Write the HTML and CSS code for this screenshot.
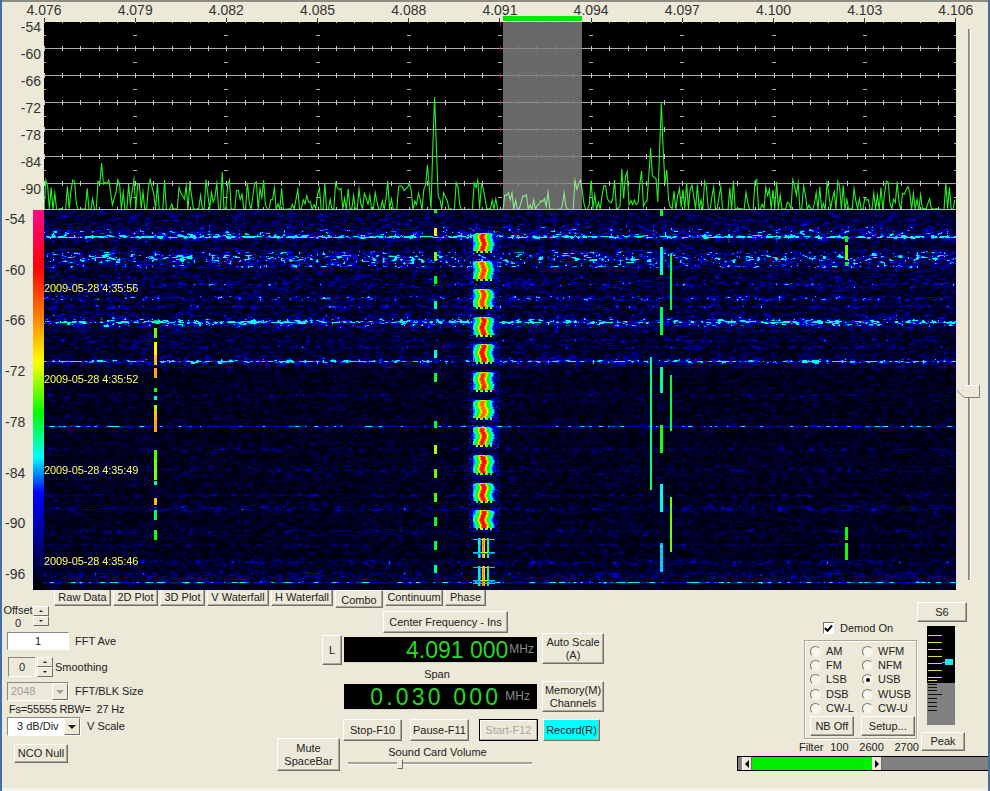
FILE: index.html
```html
<!DOCTYPE html>
<html lang="en">
<head>
<meta charset="utf-8">
<title>Spectrum Lab</title>
<link rel="stylesheet" href="styles.css">
</head>
<body>
<div class="window">
  <div class="chart">
    <div class="axis-cell">
      <div class="axis">
        <span class="tick">4.076</span><span class="tick">4.079</span><span class="tick">4.082</span><span class="tick">4.085</span><span class="tick">4.088</span><span class="tick">4.091</span><span class="tick">4.094</span><span class="tick">4.097</span><span class="tick">4.100</span><span class="tick">4.103</span><span class="tick">4.106</span>
      </div>
      <div class="band-bar"></div>
    </div>
    <div class="spec-scale">
      <span>-54</span><span>-60</span><span>-66</span><span>-72</span><span>-78</span><span>-84</span><span>-90</span>
    </div>
    <canvas id="spectrum" class="spectrum" width="912" height="188"></canvas>
    <div class="slider-v"><div class="slider-v-track"></div>
      <svg class="slider-v-thumb" width="23" height="13" viewBox="0 0 23 13"><path d="M0.5 6 L7 0.5 H22.5 V12.5 H7 Z" fill="#ece9d8" stroke="#808080"/><path d="M0.5 6 L7 0.5 H22" fill="none" stroke="#fff"/></svg>
    </div>
    <div class="wf-scale">
      <div class="wf-labels"><span>-54</span><span>-60</span><span>-66</span><span>-72</span><span>-78</span><span>-84</span><span>-90</span><span>-96</span></div>
      <div class="colorbar"></div>
    </div>
    <div class="wf-wrap">
      <canvas id="waterfall" width="912" height="380"></canvas>
      <div class="stamps"><span>2009-05-28 4:35:56</span><span>2009-05-28 4:35:52</span><span>2009-05-28 4:35:49</span><span>2009-05-28 4:35:46</span></div>
    </div>
  </div>

  <div class="tabs">
    <span class="tab tab-raw">Raw Data</span><span class="tab tab-2d">2D Plot</span><span class="tab tab-3d">3D Plot</span><span class="tab tab-v">V Waterfall</span><span class="tab tab-h">H Waterfall</span><span class="tab tab-active">Combo</span><span class="tab tab-cont">Continuum</span><span class="tab tab-phase">Phase</span>
  </div>

  <div class="panel">
    <div class="left">
      <div class="row row-offset">
        <div class="offset-text"><span>Offset</span><span>0</span></div>
        <div class="spin spin-offset"><span class="spin-btn"><i class="tri-up"></i></span><span class="spin-btn"><i class="tri-down"></i></span></div>
      </div>
      <div class="row row-fft"><div class="field field-fft">1</div><span>FFT Ave</span></div>
      <div class="row row-smooth">
        <div class="field field-smooth">0</div>
        <div class="spin spin-smooth"><span class="spin-btn"><i class="tri-up"></i></span><span class="spin-btn"><i class="tri-down"></i></span></div>
        <span>Smoothing</span>
      </div>
      <div class="row row-size">
        <div class="combo combo-size"><span class="combo-text">2048</span><span class="combo-btn"><i class="tri-big tri-dis"></i></span></div>
        <span>FFT/BLK Size</span>
      </div>
      <div class="row row-fs">Fs=55555 RBW=&nbsp; 27 Hz</div>
      <div class="row row-vscale">
        <div class="combo combo-scale"><span class="combo-text">3 dB/Div</span><span class="combo-btn"><i class="tri-big"></i></span></div>
        <span>V Scale</span>
      </div>
      <button class="btn btn-nco">NCO Null</button>
    </div>

    <div class="center">
      <button class="btn btn-cf">Center Frequency - Ins</button>
      <button class="btn btn-l">L</button>
      <div class="display display-freq"><span class="d-val">4.091 000</span><span class="d-unit">MHz</span></div>
      <button class="btn btn-auto">Auto Scale<br>(A)</button>
      <div class="span-label">Span</div>
      <div class="display display-span"><span class="d-val d-wide">0.030 000</span><span class="d-unit d-unit2">MHz</span></div>
      <button class="btn btn-mem">Memory(M)<br>Channels</button>
      <div class="transport">
        <button class="btn btn-tr">Stop-F10</button>
        <button class="btn btn-tr">Pause-F11</button>
        <button class="btn btn-tr btn-start">Start-F12</button>
        <button class="btn btn-rec">Record(R)</button>
      </div>
      <button class="btn btn-mute">Mute<br>SpaceBar</button>
      <div class="volume">
        <div class="volume-label">Sound Card Volume</div>
        <div class="volume-track"><span class="volume-thumb"></span></div>
      </div>
    </div>

    <div class="right">
      <div class="right-top">
        <div class="mode-col">
          <label class="demod"><span class="check"><svg width="9" height="9" viewBox="0 0 9 9"><path d="M1 4 L3.5 6.8 L8 1.5" fill="none" stroke="#000" stroke-width="2"/></svg></span><span>Demod On</span></label>
          <div class="group">
            <div class="radios">
              <span class="opt"><i class="radio"></i>AM</span><span class="opt"><i class="radio"></i>WFM</span>
              <span class="opt"><i class="radio"></i>FM</span><span class="opt"><i class="radio"></i>NFM</span>
              <span class="opt"><i class="radio"></i>LSB</span><span class="opt"><i class="radio radio-on"></i>USB</span>
              <span class="opt"><i class="radio"></i>DSB</span><span class="opt"><i class="radio"></i>WUSB</span>
              <span class="opt"><i class="radio"></i>CW-L</span><span class="opt"><i class="radio"></i>CW-U</span>
            </div>
            <div class="group-btns"><button class="btn btn-nb">NB Off</button><button class="btn btn-setup">Setup...</button></div>
          </div>
          <div class="filter"><span>Filter</span><span>100</span><span>2600</span><span>2700</span></div>
        </div>
        <div class="meter-col">
          <button class="btn btn-s6">S6</button>
          <svg class="meter" width="28" height="99" viewBox="0 0 28 99">
            <rect width="28" height="57" fill="#000"/><rect y="57" width="28" height="42" fill="#808080"/>
            <g fill="#e8d840"><rect x="1" y="9" width="14" height="1"/><rect x="1" y="16" width="14" height="1"/><rect x="1" y="23" width="14" height="1"/><rect x="1" y="30" width="14" height="1"/><rect x="1" y="37" width="14" height="1"/><rect x="1" y="44" width="14" height="1"/><rect x="1" y="51" width="14" height="1"/><rect x="1" y="54" width="9" height="1"/></g>
            <g fill="#111"><rect x="1" y="58" width="9" height="1"/><rect x="1" y="61" width="9" height="1"/><rect x="1" y="64" width="9" height="1"/><rect x="1" y="68" width="14" height="1"/><rect x="1" y="72" width="9" height="1"/><rect x="1" y="76" width="9" height="1"/><rect x="1" y="80" width="9" height="1"/><rect x="1" y="84" width="9" height="1"/></g>
            <rect x="15" y="36" width="4" height="1" fill="#20e0e0"/><rect x="18" y="33" width="8" height="6" fill="#20e8f0"/>
          </svg>
          <button class="btn btn-peak">Peak</button>
        </div>
      </div>
      <div class="hscroll">
        <span class="hs-gray hs-start"></span>
        <span class="hs-btn"><i class="tri-left"></i></span>
        <span class="hs-green"></span>
        <span class="hs-btn"><i class="tri-right"></i></span>
        <span class="hs-gray hs-rest"></span>
      </div>
    </div>
  </div>
</div>
<script src="script.js"></script>
</body>
</html>
```
FILE: styles.css
```css
* { box-sizing: border-box; }
html, body { margin: 0; padding: 0; }
body { width: 990px; height: 791px; overflow: hidden; background: #ece9d8; font: 11px/13px "Liberation Sans", Arial, sans-serif; color: #222; }
.window { width: 990px; height: 791px; overflow: hidden; background: #ece9d8; box-shadow: inset 2px 0 #3f6fb0, inset -2px 0 #3f6fb0, inset 0 2px #8d8c82, inset 0 -3px #f6f4ea; }

.chart { display: grid; grid-template-columns: 44px 912px 34px; grid-template-rows: 22px 188px 380px; }
.axis-cell { grid-column: 1 / -1; position: relative; height: 22px; }
.axis { display: grid; grid-template-columns: repeat(11, 91.2px); margin-left: -1.6px; padding-top: 2px; font-size: 14px; line-height: 16px; color: #333; }
.tick { display: flex; flex-direction: column; align-items: center; }
.tick::after { content: ""; width: 1px; height: 4px; background: #333; }
.band-bar { position: absolute; left: 503px; top: 16px; width: 79px; height: 5px; background: #00e800; }
.spec-scale { display: flex; flex-direction: column; margin-top: -8px; padding-right: 3px; height: 196px; align-items: flex-end; font-size: 14px; line-height: 27px; color: #333; }
.spectrum, #waterfall { display: block; }
.slider-v { grid-row: 2 / 4; grid-column: 3; position: relative; }
.slider-v-track { width: 3px; height: 551px; margin: 7px 0 0 12px; background: #a5a396; border-left: 1px solid #8a887c; border-right: 1px solid #fff; }
.slider-v-thumb { position: absolute; left: 1px; top: 363px; }
.wf-scale { display: flex; justify-content: flex-end; position: relative; }
.wf-labels { display: flex; flex-direction: column; width: 33px; padding: 0 0 0 5px; font-size: 14px; line-height: 50.7px; height: 380px; margin-top: -16px; color: #333; }
.colorbar { width: 11px; height: 380px; background: linear-gradient(180deg, #ff0a88 0%, #ff0040 8%, #ff0000 15%, #ff8000 28%, #ffff00 40%, #00ff00 53.4%, #00ffff 65%, #0000ff 74.5%, #000080 88%, #000000 100%); }
.wf-wrap { position: relative; }
.stamps { position: absolute; left: 0; top: 71px; display: flex; flex-direction: column; font-size: 11px; line-height: 14px; color: #ffff50; gap: 77px; letter-spacing: -0.1px; }

.tabs { display: flex; height: 12px; padding-left: 54px; gap: 2px; position: relative; z-index: 1; }
.tab { display: block; height: 16px; padding-top: 1px; text-align: center; font-size: 11px; line-height: 13px; background: #ece9d8; border-right: 1px solid #716f64; border-bottom: 1px solid #716f64; border-left: 1px solid #fff; box-shadow: inset -1px -1px #aca899; }
.tab-raw { width: 57px; } .tab-2d { width: 45px; } .tab-3d { width: 45px; } .tab-v { width: 62px; } .tab-h { width: 62px; }
.tab-active { width: 48px; height: 18px; padding-top: 3px; border-top: 1px solid #fff; }
.tab-cont { width: 58px; } .tab-phase { width: 41px; }

.panel { display: flex; height: 189px; }
.left { width: 277px; padding-left: 7px; }
.row { display: flex; align-items: center; gap: 6px; }
.row-offset { margin-top: 2px; margin-left: -4px; height: 22px; gap: 0; align-items: flex-start; }
.offset-text { width: 30px; display: flex; flex-direction: column; align-items: center; line-height: 13px; margin-right: 0; }
.spin { display: flex; flex-direction: column; }
.spin-offset { width: 16px; margin-top: 2px; }
.spin-smooth { width: 16px; }
.spin-btn { height: 10px; display: flex; align-items: center; justify-content: center; background: #ece9d8; border-top: 1px solid #fff; border-left: 1px solid #fff; border-right: 1px solid #716f64; border-bottom: 1px solid #716f64; }
.tri-up { width: 0; height: 0; border: 2px solid transparent; border-top: 0; border-bottom: 2px solid #222; }
.tri-down { width: 0; height: 0; border: 2px solid transparent; border-bottom: 0; border-top: 2px solid #222; }
.field { display: flex; align-items: center; justify-content: center; border-top: 1px solid #8a887c; border-left: 1px solid #8a887c; border-right: 1px solid #fff; border-bottom: 1px solid #fff; }
.field-fft { width: 62px; height: 18px; background: #fff; }
.row-fft { margin-top: 6px; height: 18px; }
.row-smooth { margin-top: 7px; height: 20px; margin-left: 1px; gap: 1px; }
.row-smooth > span:last-child { margin-left: 1px; }
.field-smooth { width: 28px; height: 20px; }
.row-size { margin-top: 5px; height: 19px; }
.combo { display: flex; height: 19px; border-top: 1px solid #8a887c; border-left: 1px solid #8a887c; border-right: 1px solid #fff; border-bottom: 1px solid #fff; }
.combo-text { flex: 1; display: flex; align-items: center; padding-left: 3px; }
.combo-size { width: 62px; color: #a0a0a0; }
.combo-scale { width: 74px; background: #fff; }
.combo-scale .combo-text { padding-left: 9px; }
.combo-btn { width: 16px; display: flex; align-items: center; justify-content: center; background: #ece9d8; border-top: 1px solid #fff; border-left: 1px solid #fff; border-right: 1px solid #716f64; border-bottom: 1px solid #716f64; }
.tri-big { width: 0; height: 0; border: 4px solid transparent; border-bottom: 0; border-top: 4px solid #111; }
.tri-dis { border-top-color: #a0a0a0; }
.row-fs { margin-top: 2px; height: 13px; margin-left: 2px; letter-spacing: -0.2px; }
.row-vscale { margin-top: 1px; height: 19px; }
.btn { display: block; margin: 0; padding: 0; font: 11px/13px "Liberation Sans", Arial, sans-serif; color: #222; text-align: center; background: #ece9d8; border: 1px solid; border-color: #fff #716f64 #716f64 #fff; box-shadow: inset -1px -1px #aca899; border-radius: 0; }
.btn-nco { width: 54px; height: 19px; margin: 8px 0 0 7px; }

.center { width: 328px; display: grid; grid-template-columns: 45px 21px 194px 5px 63px; grid-template-rows: 9px 22px 31px 17px 31px 7px 22px 30px; }
.btn-cf { grid-column: 3 / 6; grid-row: 2; width: 125px; height: 22px; margin-left: 40px; }
.btn-l { grid-column: 2; grid-row: 3; width: 20px; height: 30px; margin-top: 2px; }
.display { background: #000; grid-column: 3; display: flex; align-items: center; justify-content: flex-end; margin-left: 1px; width: 193px; height: 26px; border-bottom: 1px solid #d8d6c6; color: #2ad62a; }
.display-freq { grid-row: 3; margin-top: 4px; padding-right: 3px; }
.display-span { grid-row: 5; margin-top: 3px; padding-right: 7px; }
.d-val { font-size: 23px; line-height: 26px; }
.d-wide { letter-spacing: 3.2px; margin-right: 3px; }
.d-unit { font-size: 12px; color: #8a8a8a; margin-left: 1px; }
.btn-auto { grid-column: 5; grid-row: 3; width: 62px; height: 31px; }
.span-label { grid-column: 3; grid-row: 4; line-height: 13px; padding-top: 4px; text-align: center; padding-right: 6px; }
.btn-mem { grid-column: 5; grid-row: 5; width: 62px; height: 31px; }
.transport { grid-column: 3 / 6; grid-row: 7; display: flex; gap: 8px; }
.btn-tr { width: 59px; height: 22px; }
.btn-start { margin-left: 2px; color: #a8a698; border: 1px solid #000; box-shadow: inset -1px -1px #aca899, inset 1px 1px #fff; }
.btn-rec { width: 57px; height: 22px; margin-left: -3px; background: #00ffff; }
.btn-mute { grid-column: 1 / 3; grid-row: 7 / 9; width: 63px; height: 33px; align-self: end; }
.volume { grid-column: 3 / 6; grid-row: 8; }
.volume-label { width: 189px; text-align: center; margin-top: 5px; line-height: 13px; }
.volume-track { position: relative; width: 184px; height: 3px; margin: 3px 0 0 5px; background: #a5a396; border-bottom: 1px solid #fff; }
.volume-thumb { position: absolute; left: 49px; top: -3px; width: 6px; height: 10px; background: #ece9d8; border: 1px solid; border-color: #fff #716f64 #716f64 #fff; }

.right { width: 385px; }
.right-top { display: flex; height: 154px; margin-left: 199px; }
.mode-col { width: 113px; }
.demod { display: flex; align-items: center; gap: 6px; height: 38px; padding: 14px 0 0 19px; }
.check { width: 11px; height: 12px; display: flex; align-items: center; justify-content: center; background: #fff; border: 1px solid; border-color: #716f64 #fff #fff #716f64; }
.group { height: 99px; padding: 3px 1px 0 5px; border: 1px solid #aca899; box-shadow: 1px 1px #fff, inset 1px 1px #fff; }
.radios { display: grid; grid-template-columns: 52px 1fr; grid-auto-rows: 14.3px; }
.opt { display: flex; align-items: center; gap: 5px; }
.radio { width: 11px; height: 11px; border-radius: 50%; display: flex; align-items: center; justify-content: center; background: #f8f6ec; border: 1px solid; border-color: #7a786c #f4f2e8 #f4f2e8 #7a786c; }
.radio-on::after { content: ""; width: 4px; height: 4px; border-radius: 50%; background: #000; }
.group-btns { display: flex; gap: 7px; margin-top: 1px; }
.btn-nb { width: 44px; height: 20px; }
.btn-setup { width: 55px; height: 20px; }
.filter { display: flex; justify-content: space-between; width: 120px; margin: 2px 0 0 -5px; line-height: 13px; }
.filter span:nth-child(1) { margin-right: -4px; }
.meter-col { width: 50px; }
.btn-s6 { width: 50px; height: 20px; }
.meter { display: block; margin: 4px 0 0 10px; }
.btn-peak { width: 44px; height: 19px; margin: 7px 0 0 4px; }
.hscroll { display: flex; width: 251px; height: 15px; margin-left: 132px; border: 1px solid #000; border-right: 0; background: #808080; }
.hs-gray { background: #808080; }
.hs-start { width: 4px; }
.hs-rest { flex: 1; }
.hs-btn { width: 10px; display: flex; align-items: center; justify-content: center; background: #ece9d8; border-left: 1px solid #fff; border-right: 1px solid #716f64; }
.hs-green { width: 120px; background: #00ee00; }
.tri-left { width: 0; height: 0; border: 4px solid transparent; border-left: 0; border-right: 4px solid #000; }
.tri-right { width: 0; height: 0; border: 4px solid transparent; border-right: 0; border-left: 4px solid #000; }
```
FILE: script.js
```js
(function () {
  function rng(a) {
    return function () {
      a |= 0; a = a + 0x6D2B79F5 | 0;
      var t = Math.imul(a ^ a >>> 15, 1 | a);
      t = t + Math.imul(t ^ t >>> 7, 61 | t) ^ t;
      return ((t ^ t >>> 14) >>> 0) / 4294967296;
    };
  }

  /* ---------- spectrum ---------- */
  var sc = document.getElementById('spectrum').getContext('2d');
  var W = 912, SH = 188, R = rng(7);
  sc.fillStyle = '#000'; sc.fillRect(0, 0, W, SH);
  var bx0 = 503 - 44, bx1 = 582 - 44;
  sc.fillStyle = '#686868'; sc.fillRect(bx0, 0, bx1 - bx0, SH);

  function grid(line, tick, dash) {
    var lines = [26, 53, 80, 107, 134, 161];
    sc.fillStyle = line;
    lines.forEach(function (y) { sc.fillRect(0, y, W, 1); });
    sc.fillStyle = tick;
    for (var i = 0; i <= 50; i++) {
      var x = Math.round(i * 18.24);
      lines.forEach(function (y) { sc.fillRect(x, y - 2, 1, 5); });
      sc.fillRect(x, 0, 1, 1);
      sc.fillRect(x, SH - 3, 1, 3);
    }
    sc.fillStyle = dash;
    for (var k = 0; k <= 10; k++) {
      var mx = Math.round(k * 91.2);
      [13, 40, 67, 94, 121, 148, 175].forEach(function (y) { sc.fillRect(mx - 2, y, 4, 1); });
    }
  }
  sc.save(); sc.beginPath(); sc.rect(0, 0, bx0, SH); sc.rect(bx1, 0, W - bx1, SH); sc.clip();
  grid('#a8a8a8', '#c8c8c8', '#b0b0b0');
  sc.restore();
  sc.save(); sc.beginPath(); sc.rect(bx0, 0, bx1 - bx0, SH); sc.clip();
  grid('#888', '#808080', '#6e6e6e');
  sc.restore();
  sc.fillStyle = '#c02020';
  [26, 53, 80, 107, 134, 161].forEach(function (y) { sc.fillRect(456, y - 2, 1, 5); });
  sc.fillRect(456, 0, 1, 4);

  var pts = [];
  for (var px = 0; px <= W; px += 1.8) {
    var r = R(), h;
    if (r < 0.5) h = R() * 1.5;
    else h = 5 + Math.pow(R(), 1.2) * 26;
    if (px > 560 && px < 640) h += R() * 12;
    if (px > bx0 && px < bx1 - 15) h *= 0.6;
    pts.push(h);
  }
  var peaks = [[1, 30], [4, 24], [58, 47], [179, 38], [121, 30], [391, 113], [383, 45], [606, 62], [617, 108], [622, 40], [537, 30], [534, 26], [504, 18]];
  peaks.forEach(function (p) {
    var i = Math.round(p[0] / 1.8);
    pts[i] = Math.max(pts[i], p[1]);
    if (p[1] > 40) { pts[i - 1] = Math.max(pts[i - 1], p[1] * 0.55); pts[i + 1] = Math.max(pts[i + 1], p[1] * 0.55); }
  });
  function trace(color) {
    sc.strokeStyle = color; sc.lineWidth = 1.1;
    sc.beginPath();
    pts.forEach(function (h, i) {
      var x = i * 1.8, y = SH - h;
      if (i) sc.lineTo(x, y); else sc.moveTo(x, y);
    });
    sc.stroke();
  }
  sc.save(); sc.beginPath(); sc.rect(0, 0, bx0, SH); sc.rect(bx1, 0, W - bx1, SH); sc.clip();
  trace('#28f028'); sc.restore();
  sc.save(); sc.beginPath(); sc.rect(bx0, 0, bx1 - bx0, SH); sc.clip();
  trace('#8ee68e'); sc.restore();
  sc.fillStyle = '#b8b8c8'; sc.fillRect(0, SH - 1, W, 1);

  /* ---------- waterfall ---------- */
  var stops = [[0, 0, 0, 0], [0.255, 0, 0, 255], [0.35, 0, 255, 255], [0.466, 0, 255, 0], [0.597, 255, 255, 0], [0.85, 255, 0, 0], [1, 255, 10, 136]];
  function cmap(v) {
    if (v <= 0) return [0, 0, 0];
    if (v >= 1) return [255, 10, 136];
    for (var i = 1; i < stops.length; i++) {
      if (v <= stops[i][0]) {
        var a = stops[i - 1], b = stops[i], t = (v - a[0]) / (b[0] - a[0]);
        return [a[1] + (b[1] - a[1]) * t, a[2] + (b[2] - a[2]) * t, a[3] + (b[3] - a[3]) * t];
      }
    }
    return [255, 255, 255];
  }
  var wc = document.getElementById('waterfall').getContext('2d');
  var H = 380, img = wc.createImageData(W, H), d = img.data, Q = rng(1234);
  function put(x, y, v) {
    if (x < 0 || y < 0 || x >= W || y >= H) return;
    var c = cmap(v), o = (y * W + x) * 4;
    d[o] = c[0]; d[o + 1] = c[1]; d[o + 2] = c[2]; d[o + 3] = 255;
  }
  var bands = [[236.5, 1.1, .18], [233, 5, .1], [258, 4.5, .16], [266, 1, .1], [252, 1, .06], [284, 1, .06], [298, 1.5, .09], [306, 1, .06], [322, 1.6, .15], [322, 5, .09], [340, 1, .05], [347, 1, .05], [361, 1.1, .14], [361, 3, .06], [395, 1, .04], [426, 0.9, .1], [449, .8, .04], [470, 1, .04], [495, 1, .05], [508, 2, .06], [531, 1, .04], [545, .8, .04], [562, 2, .05], [575, 3, .05], [582, .8, .12], [216, 5, .03], [284, 12, .025]];
  var lines = { 236: .14, 237: .16, 321: .08, 322: .12, 361: .14, 426: .12, 582: .12 };
  var cw = 3, cols = Math.ceil(W / cw) + 2, prev = new Array(cols).fill(0.3);
  for (var y = 0; y < H; y++) {
    var ay = y + 210, b = 0.024 + Q() * Q() * 0.03;
    if (ay < 370) b += 0.01;
    bands.forEach(function (g) { var z = (ay - g[0]) / g[1]; b += g[2] * Math.exp(-z * z / 2); });
    var ln = lines[ay] || 0;
    var row = [];
    for (var c = 0; c < cols; c++) row[c] = prev[c] * 0.35 + Q() * 0.65;
    for (var x = 0; x < W; x++) {
      var f = x / cw, i0 = Math.floor(f), t = f - i0;
      var hv = row[i0] * (1 - t) + row[i0 + 1] * t;
      var v = b * (0.06 + 4.2 * hv * hv * hv) + 0.035 * Math.pow(Q(), 5) + 0.005 * Q() + ln * (0.5 + hv);
      if (Q() < 0.035) v += b * 0.8;
      if (v > 0.36) v = 0.36;
      put(x, y, v);
    }
    prev = row;
  }
  function vseg(x, w, y0, y1, v) {
    for (var yy = y0; yy < y1; yy++) {
      for (var xx = x; xx < x + w; xx++) put(xx - 44, yy - 210, v + (Q() - 0.5) * 0.03);
    }
  }
  [[320, 322, .46], [328, 338, .52], [342, 355, .6], [355, 365, .66], [368, 378, .68], [388, 392, .45], [396, 400, .38], [405, 410, .55], [410, 420, .66], [420, 432, .68], [450, 460, .5], [460, 480, .53], [481, 485, .4], [498, 505, .66], [510, 520, .42], [530, 540, .48]].forEach(function (s) { vseg(154, 3, s[0], s[1], s[2]); });
  [[210, 213, .45], [228, 236, .62], [252, 261, .53], [276, 284, .45], [301, 309, .38], [350, 358, .36], [373, 382, .44], [421, 428, .46], [445, 454, .55], [469, 478, .52], [493, 502, .5], [517, 526, .46], [541, 550, .44], [565, 573, .4]].forEach(function (s) { vseg(434, 3, s[0], s[1], s[2]); });
  [[210, 216, .47], [247, 275, .37], [307, 335, .43], [367, 393, .4], [425, 453, .48], [484, 512, .36], [543, 572, .33]].forEach(function (s) { vseg(660, 3, s[0], s[1], s[2]); });
  [[254, 310, .44], [375, 431, .44], [497, 552, .52]].forEach(function (s) { vseg(670, 2, s[0], s[1], s[2]); });
  vseg(650, 2, 357, 490, .41);
  [[236, 242, .47], [245, 260, .52], [262, 266, .46], [527, 540, .46], [543, 560, .47]].forEach(function (s) { vseg(845, 3, s[0], s[1], s[2]); });

  var prof = [.3, .34, .38, .42, .46, .5, .6, .72, .82, .85, .85, .82, .75, .62, .52, .47, .44, .4, .36, .33, .28, .2];
  var tops = [233, 261, 289, 317, 344, 372, 400, 427, 455, 483, 510];
  var gain = [1, .82, .85, 1, 1, .88, .7, .95, 1, 1, 1];
  tops.forEach(function (top, n) {
    for (var dy = -2; dy < 22; dy++) {
      for (var dx = -4; dx < 27; dx++) {
        var px = 473 + dx - 44, py = top + dy - 210;
        if (dx < 0 || dx > 21 || dy < 0 || dy >= 20) {
          if (Q() < 0.45) put(px, py, 0.12 + Q() * 0.16);
          continue;
        }
        var w = Math.round(0.9 * Math.sin(dy * 0.45 + n));
        var i = Math.max(0, Math.min(21, dx + w));
        var v = prof[i];
        if (v > .5) v = .5 + (v - .5) * gain[n];
        v += (Q() - 0.5) * 0.05;
        if (dy >= 18) v = (dx % 5 < 2 || dx < 3 || dx > 18) ? 0.03 : 0.42 + Q() * 0.2;
        if (dy === 0) v *= 0.8;
        put(px, py, v);
      }
    }
  });
  [538, 566].forEach(function (top, n) {
    for (var dy = 0; dy < 20; dy++) {
      [[5, .34], [6, .38], [7, .3], [9, .68], [10, .72], [11, .62], [14, .5], [15, .36]].forEach(function (c) { put(473 + c[0] - 44, top + dy - 210, c[1] + (Q() - .5) * .05); });
    }
    for (var dx = 0; dx < 22; dx++) {
      put(473 + dx - 44, top + 1 - 210, .33 + (dx > 7 && dx < 15 ? .33 : 0));
      put(473 + dx - 44, top + 14 - 210, .33 + (dx > 7 && dx < 15 ? .25 : 0));
      put(473 + dx - 44, top + 15 - 210, .3);
      if (n === 1) put(473 + dx - 44, top + 17 - 210, .46);
    }
  });
  wc.putImageData(img, 0, 0);
  var tmp = document.createElement('canvas'); tmp.width = W; tmp.height = H;
  tmp.getContext('2d').drawImage(wc.canvas, 0, 0);
  wc.filter = 'blur(0.45px)';
  wc.drawImage(tmp, 0, 0);
  wc.filter = 'none';
})();
```
